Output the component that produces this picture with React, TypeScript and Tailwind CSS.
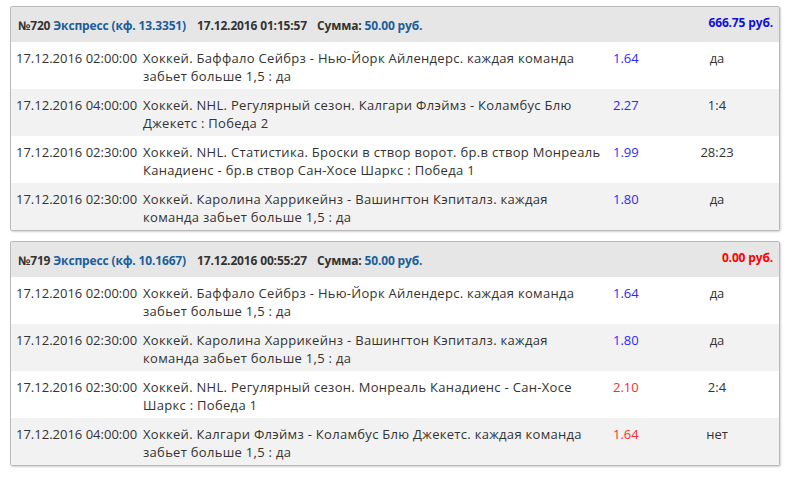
type Bet = {
    date: string;
    text: string;
    odds: string;
    won: boolean;
    result: string;
};

type Express = {
    id: number;
    coef: string;
    created: string;
    sum: string;
    payout: string;
    won: boolean;
    bets: Bet[];
};

const expresses: Express[] = [
    {
        id: 720,
        coef: '13.3351',
        created: '17.12.2016 01:15:57',
        sum: '50.00',
        payout: '666.75',
        won: true,
        bets: [
            {
                date: '17.12.2016 02:00:00',
                text: 'Хоккей. Баффало Сейбрз - Нью-Йорк Айлендерс. каждая команда забьет больше 1,5 : да',
                odds: '1.64',
                won: true,
                result: 'да'
            },
            {
                date: '17.12.2016 04:00:00',
                text: 'Хоккей. NHL. Регулярный сезон. Калгари Флэймз - Коламбус Блю Джекетс : Победа 2',
                odds: '2.27',
                won: true,
                result: '1:4'
            },
            {
                date: '17.12.2016 02:30:00',
                text: 'Хоккей. NHL. Статистика. Броски в створ ворот. бр.в створ Монреаль Канадиенс - бр.в створ Сан-Хосе Шаркс : Победа 1',
                odds: '1.99',
                won: true,
                result: '28:23'
            },
            {
                date: '17.12.2016 02:30:00',
                text: 'Хоккей. Каролина Харрикейнз - Вашингтон Кэпиталз. каждая команда забьет больше 1,5 : да',
                odds: '1.80',
                won: true,
                result: 'да'
            }
        ]
    },
    {
        id: 719,
        coef: '10.1667',
        created: '17.12.2016 00:55:27',
        sum: '50.00',
        payout: '0.00',
        won: false,
        bets: [
            {
                date: '17.12.2016 02:00:00',
                text: 'Хоккей. Баффало Сейбрз - Нью-Йорк Айлендерс. каждая команда забьет больше 1,5 : да',
                odds: '1.64',
                won: true,
                result: 'да'
            },
            {
                date: '17.12.2016 02:30:00',
                text: 'Хоккей. Каролина Харрикейнз - Вашингтон Кэпиталз. каждая команда забьет больше 1,5 : да',
                odds: '1.80',
                won: true,
                result: 'да'
            },
            {
                date: '17.12.2016 02:30:00',
                text: 'Хоккей. NHL. Регулярный сезон. Монреаль Канадиенс - Сан-Хосе Шаркс : Победа 1',
                odds: '2.10',
                won: false,
                result: '2:4'
            },
            {
                date: '17.12.2016 04:00:00',
                text: 'Хоккей. Калгари Флэймз - Коламбус Блю Джекетс. каждая команда забьет больше 1,5 : да',
                odds: '1.64',
                won: false,
                result: 'нет'
            }
        ]
    }
];

const ExpressCard = ({ express }: { express: Express }) => {
    return (
        <div className="overflow-hidden rounded-[2px] border border-[#b9b9b9] bg-white shadow-[1px_1px_2px_rgba(0,0,0,0.18)]">
            {/* Header */}
            <div className="flex h-[35px] justify-between bg-[#e6e6e6] pl-[7px] pr-[6px] text-[12px] font-bold leading-[16px] tracking-[-0.15px] text-[#333]">
                <div className="flex pt-[11px]">
                    <span>
                        №{express.id}{' '}
                        <span className="text-[#1b5e9c]">Экспресс (кф. {express.coef})</span>
                    </span>
                    <span className="ml-[11px]">{express.created}</span>
                    <span className="ml-[10px]">
                        Сумма: <span className="text-[#1b5e9c]">{express.sum} руб.</span>
                    </span>
                </div>
                <div className={`pt-[8px] ${express.won ? 'text-[#0f0fd6]' : 'text-[#ff0000]'}`}>
                    {express.payout} руб.
                </div>
            </div>

            {/* Bets */}
            {express.bets.map((bet, i) => (
                <div
                    key={i}
                    className={`flex h-[47px] pt-[7px] text-[13px] leading-[18px] text-[#333] ${
                        i % 2 === 1 ? 'bg-[#f2f2f2]' : 'bg-white'
                    }`}
                >
                    <div className="w-[132px] shrink-0 pl-[5px]">{bet.date}</div>
                    <div className="w-[460px] shrink-0 tracking-[0.3px]">{bet.text}</div>
                    <div
                        className={`w-[63px] shrink-0 pl-[10px] ${
                            bet.won ? 'text-[#2a2aff]' : 'text-[#ff2a2a]'
                        }`}
                    >
                        {bet.odds}
                    </div>
                    <div className="w-[102px] shrink-0 text-center">{bet.result}</div>
                </div>
            ))}
        </div>
    );
};

const App = () => {
    return (
        <div className="min-h-[480px] bg-white pl-[10px] pt-[6px] font-['Open_Sans',sans-serif]">
            <div className="flex w-[770px] flex-col gap-[10px]">
                {expresses.map((e) => (
                    <ExpressCard key={e.id} express={e} />
                ))}
            </div>
        </div>
    );
};

export default App;
